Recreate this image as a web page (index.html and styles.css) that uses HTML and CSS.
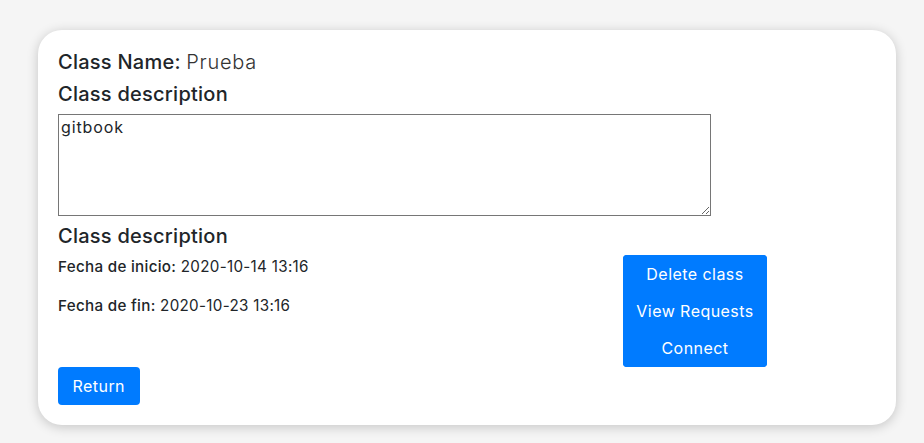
FILE: index.html
```html
<!DOCTYPE html>
<html><head><meta charset="utf-8"><link rel="stylesheet" href="styles.css"></head>
<body>
<div class="card">
  <h5 class="title">Class Name: <span class="value">Prueba</span></h5>
  <h5 class="title">Class description</h5>
  <textarea class="desc">gitbook</textarea>
  <h5 class="title">Class description</h5>
  <div class="row">
    <div class="dates">
      <p class="line"><span class="label">Fecha de inicio:</span> 2020-10-14 13:16</p>
      <p class="line"><span class="label">Fecha de fin:</span> 2020-10-23 13:16</p>
    </div>
    <div class="btn-group">
      <button class="btn">Delete class</button>
      <button class="btn">View Requests</button>
      <button class="btn">Connect</button>
    </div>
  </div>
  <div><button class="btn btn-single">Return</button></div>
</div>
</body></html>
```
FILE: styles.css
```css
html,body{margin:0;padding:0}
body{background:#f5f5f5;font-family:Inter,"DejaVu Sans",sans-serif;color:#212529;padding:30px 28px 18px 38px;}
.card{background:#fff;border-radius:24px;box-shadow:0 2px 12px rgba(0,0,0,0.2);padding:20px 20px 20px 20px;}
.title{font-size:20px;font-weight:500;line-height:24px;margin:0 0 8px 0;letter-spacing:0.25px}
.value{font-weight:300;color:#333;letter-spacing:0.7px}
.desc{display:block;box-sizing:border-box;width:653px;height:102px;margin:0 0 8px 0;border:1px solid #767676;padding:2px 2px;font-family:Inter,"DejaVu Sans",sans-serif;font-size:16px;letter-spacing:0.9px;color:#212529;resize:both;outline:none}
.row{display:grid;grid-template-columns:565px 144px;}
.line{margin:0 0 17px 0;font-size:15.2px;line-height:22px;letter-spacing:0.3px}
.label{font-weight:500}
.btn-group{display:flex;flex-direction:column;background:#007bff;border-radius:4px;overflow:hidden;margin-top:-1px;height:112px}
.btn{background:#007bff;color:#fff;border:0;font-family:Inter,"DejaVu Sans",sans-serif;font-size:16px;letter-spacing:0.45px;line-height:24px;padding:6px 12px;flex:1;box-sizing:border-box;cursor:pointer}
.btn-single{border-radius:4px;height:38px;padding:6px 14.5px;display:block}
```
